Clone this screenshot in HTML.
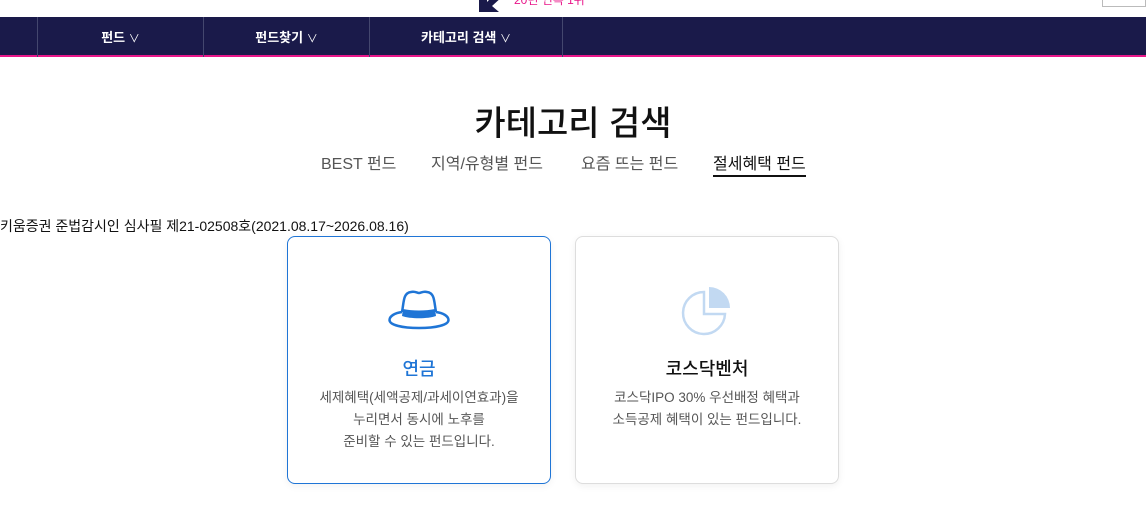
<!DOCTYPE html>
<html><head><meta charset="utf-8"><style>
*{margin:0;padding:0;box-sizing:border-box}
body{width:1146px;height:517px;overflow:hidden;background:#fff;font-family:"Liberation Sans","Noto Sans CJK KR",sans-serif;position:relative}
.top{position:absolute;left:0;top:0;width:1146px;height:17px;overflow:hidden}
.nav{position:absolute;left:0;top:17px;width:1146px;height:40px;background:#1a1a4a;border-bottom:2px solid #e8178a}
.nav div{position:absolute;top:0;height:40px;border-left:1px solid #44476e;color:#fff;font-size:13px;font-weight:bold;text-align:center;line-height:42px}
.nav i{font-style:normal;font-weight:normal;font-size:11px}
h1{position:absolute;top:96px;width:100%;text-align:center;font-size:34px;font-weight:500;color:#111}
.tabs{position:absolute;top:150px;left:0;width:100%;font-size:16px;color:#555}
.tabs span{position:absolute}
.notice{position:absolute;left:0;top:216px;font-size:14px;color:#111}
.card{position:absolute;top:236px;width:264px;height:248px;border:1px solid #ddd;border-radius:8px;background:#fff;text-align:center;box-shadow:0 2px 8px rgba(0,0,0,.06)}
.card.a{border-color:#1f75d6}
.card h3{position:absolute;top:118px;width:100%;font-size:18px;font-weight:500}
.card p{position:absolute;top:150px;width:100%;font-size:13.5px;color:#555;line-height:22px}
</style></head><body>
<div class="top">
<svg style="position:absolute;left:479px;top:-4px" width="26" height="16" viewBox="0 0 26 16"><path d="M0 0 H8 V6 L14 0 H24 L13 10 L20 16 H0 Z" fill="#1a1a4a"/></svg>
<div style="position:absolute;left:514px;top:-9px;font-size:12px;color:#e8178a">20년 연속 1위</div>
<div style="position:absolute;left:1102px;top:-2px;width:44px;height:9px;border:1px solid #bbb"></div>
</div>
<div class="nav">
<div style="left:37px;width:166px">펀드 <i>∨</i></div>
<div style="left:203px;width:166px">펀드찾기 <i>∨</i></div>
<div style="left:369px;width:194px;border-right:1px solid #44476e">카테고리 검색 <i>∨</i></div>
</div>
<h1>카테고리 검색</h1>
<div class="tabs">
<span style="left:321px">BEST 펀드</span>
<span style="left:431px">지역/유형별 펀드</span>
<span style="left:581px">요즘 뜨는 펀드</span>
<span style="left:713px;color:#111;border-bottom:2px solid #111;padding-bottom:1px">절세혜택 펀드</span>
</div>
<div class="notice">키움증권 준법감시인 심사필 제21-02508호(2021.08.17~2026.08.16)</div>
<div class="card a" style="left:287px">
<svg style="position:absolute;left:100px;top:53px" width="62" height="40" viewBox="0 0 62 40"><path d="M14 22 C16 12 15 3 23 2 C27 1 29 3 31 3 C33 3 35 1 39 2 C47 3 46 12 48 22" fill="none" stroke="#1f75d6" stroke-width="2.5"/><path d="M14 22 C7 23 1.5 26 1.5 30 C1.5 35 14 38 31 38 C48 38 60.5 35 60.5 30 C60.5 26 55 23 48 22" fill="none" stroke="#1f75d6" stroke-width="2.5"/><path d="M15 19 C24 21 38 21 47 19 L48 26 C40 29 22 29 14 26 Z" fill="#1f75d6"/></svg>
<h3 style="color:#1f75d6">연금</h3>
<p>세제혜택(세액공제/과세이연효과)을<br>누리면서 동시에 노후를<br>준비할 수 있는 펀드입니다.</p>
</div>
<div class="card" style="left:575px">
<svg style="position:absolute;left:104px;top:47px" width="54" height="54" viewBox="0 0 54 54"><path d="M24 8 A21 21 0 1 0 45 30 L24 30 Z" fill="none" stroke="#c2d9f2" stroke-width="2.5"/><path d="M29 3 A21 21 0 0 1 50 24 L29 24 Z" fill="#c2d9f2"/></svg>
<h3 style="color:#111">코스닥벤처</h3>
<p>코스닥IPO 30% 우선배정 혜택과<br>소득공제 혜택이 있는 펀드입니다.</p>
</div>
</body></html>
